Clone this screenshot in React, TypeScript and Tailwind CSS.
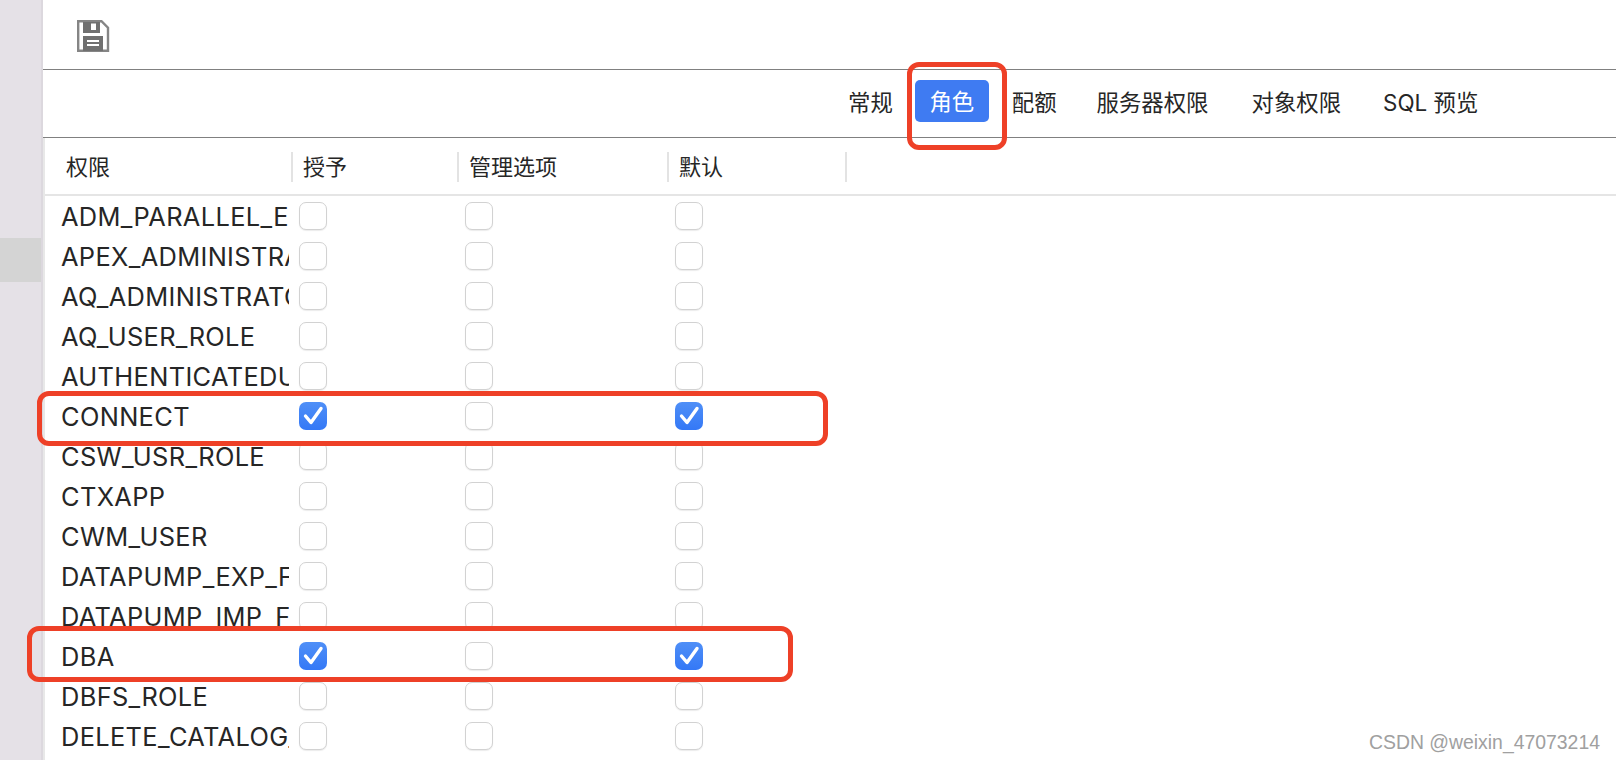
import React from "react";

const tabs = ["常规", "角色", "配额", "服务器权限", "对象权限", "SQL 预览"];

const rows = [
  { name: "ADM_PARALLEL_EXECUTE_TASK" },
  { name: "APEX_ADMINISTRATOR_ROLE" },
  { name: "AQ_ADMINISTRATOR_ROLE" },
  { name: "AQ_USER_ROLE" },
  { name: "AUTHENTICATEDUSER" },
  { name: "CONNECT", on: true },
  { name: "CSW_USR_ROLE" },
  { name: "CTXAPP" },
  { name: "CWM_USER" },
  { name: "DATAPUMP_EXP_FULL_DATABASE" },
  { name: "DATAPUMP_IMP_FULL_DATABASE" },
  { name: "DBA", on: true },
  { name: "DBFS_ROLE" },
  { name: "DELETE_CATALOG_ROLE" },
];

const font = "font-['Inter','Noto_Sans_CJK_SC',sans-serif]";

const SaveIcon = () => (
  <svg width="33" height="33" viewBox="0 0 33 33" fill="none">
    <path d="M1.2 1.2H24.5L31 7.7V30.8H1.2Z" stroke="#858585" strokeWidth="2.4" />
    <path d="M6 2H23V13H6Z" fill="#707070" />
    <path d="M14 3.5H19V10H14Z" fill="#ffffff" />
    <path d="M6 16H26V31H6Z" fill="#707070" />
    <path d="M10 21H22M10 25H22" stroke="#ffffff" strokeWidth="1.8" />
  </svg>
);

const Check = ({ on }: { on?: boolean }) =>
  on ? (
    <div className="w-7 h-7 rounded-[7px] bg-gradient-to-b from-[#4f8ff7] to-[#3478f6]">
      <svg width="28" height="28" viewBox="0 0 28 28" fill="none">
        <path d="M6.5 14L12 20.5L22 6.5" stroke="#ffffff" strokeWidth="3.4" strokeLinecap="round" strokeLinejoin="round" />
      </svg>
    </div>
  ) : (
    <div className="w-7 h-7 rounded-[7px] bg-white border border-[#d2d2d2] shadow-[0_1px_1px_rgba(0,0,0,0.08)]" />
  );

const HeadCell = ({ label, w, pl }: { label: string; w: string; pl: string }) => (
  <div className={`${w} ${pl} h-[30px] flex items-center shrink-0 border-r-2 border-[#e3e3e3]`}>{label}</div>
);

export default function App() {
  return (
    <div className={`relative w-[1616px] h-[760px] overflow-hidden bg-white flex text-[#262626] ${font}`}>
      <aside className="w-[43px] shrink-0 h-full bg-[#e5e1e7] border-r-2 border-[#dcd8de] pt-[238px]">
        <div className="h-[44px] bg-[#d4d4d4]" />
      </aside>

      <main className="flex-1 min-w-0 flex flex-col">
        <div className="h-[70px] shrink-0 border-b border-[#808080] pl-[34px] pt-[20px]">
          <SaveIcon />
        </div>

        <div className="h-[68px] shrink-0 border-b border-[#808080] flex items-start pt-[10px] pl-[805px] text-[22.4px] leading-[45px]">
          <span>{tabs[0]}</span>
          <span className="ml-[22px] w-[74px] h-[42px] rounded-[5px] bg-[#3f7bf2] text-white text-center leading-[43px]">{tabs[1]}</span>
          <span className="ml-[23px]">{tabs[2]}</span>
          <span className="ml-[40px]">{tabs[3]}</span>
          <span className="ml-[43px]">{tabs[4]}</span>
          <span className="ml-[42px]">{tabs[5]}</span>
        </div>

        <div className="flex-1 min-h-0 border-l-2 border-[#e8e8e8]">
          <div className="h-[58px] border-b-2 border-[#e5e5e5] flex items-start pt-[14px] text-[22px]">
            <HeadCell label="权限" w="w-[248px]" pl="pl-[21px]" />
            <HeadCell label="授予" w="w-[166px]" pl="pl-[10px]" />
            <HeadCell label="管理选项" w="w-[210px]" pl="pl-[10px]" />
            <HeadCell label="默认" w="w-[178px]" pl="pl-[10px]" />
          </div>

          <div className="pt-[6px] flex flex-col gap-[12px]">
            {rows.map((r) => (
              <div key={r.name} className="h-7 flex items-center text-[25.4px] tracking-[0.35px]">
                <div className="w-[228px] ml-[16px] pt-[2px] overflow-hidden whitespace-nowrap shrink-0 leading-[28px]">{r.name}</div>
                <div className="w-[10px] shrink-0" />
                <div className="w-[166px] shrink-0">
                  <Check on={r.on} />
                </div>
                <div className="w-[210px] shrink-0">
                  <Check />
                </div>
                <Check on={r.on} />
              </div>
            ))}
          </div>
        </div>
      </main>

      {/* red annotation boxes drawn over the screenshot */}
      <div className="absolute left-[907px] top-[62px] w-[100px] h-[88px] border-[5px] border-[#ee4027] rounded-[12px]" />
      <div className="absolute left-[37px] top-[391px] w-[791px] h-[55px] border-[5px] border-[#ee4027] rounded-[12px]" />
      <div className="absolute left-[27px] top-[626px] w-[766px] h-[56px] border-[5px] border-[#ee4027] rounded-[12px]" />

      <div className="absolute left-[1369px] top-[731px] text-[19.4px] leading-[22px] text-[#a0a0a0] font-['Liberation_Sans',sans-serif]">
        CSDN @weixin_47073214
      </div>
    </div>
  );
}
